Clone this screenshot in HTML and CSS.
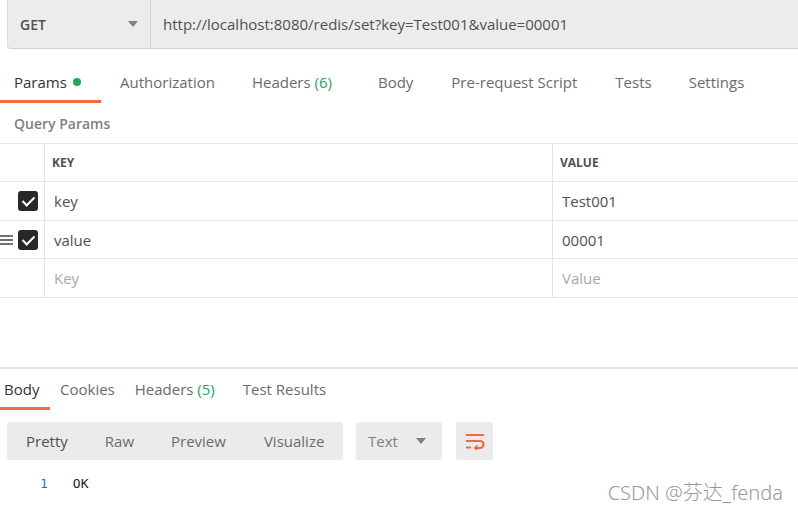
FILE: index.html
```html
<!DOCTYPE html>
<html lang="en">

<head>
    <meta charset="UTF-8">
    <meta name="viewport" content="width=device-width, initial-scale=1.0">
    <title>Postman Request</title>
    <link rel="stylesheet" href="styles.css">
</head>

<body>
    <div class="url-bar">
        <div class="method">
            <span>GET</span>
            <span class="caret"></span>
        </div>
        <div class="url">http://localhost:8080/redis/set?key=Test001&amp;value=00001</div>
    </div>

    <div class="tabs req-tabs">
        <div class="tab active">Params <span class="dot"></span></div>
        <div class="tab">Authorization</div>
        <div class="tab">Headers <span class="count">(6)</span></div>
        <div class="tab">Body</div>
        <div class="tab">Pre-request Script</div>
        <div class="tab">Tests</div>
        <div class="tab">Settings</div>
    </div>

    <div class="section-title">Query Params</div>

    <div class="params">
        <div class="row head">
            <div class="cell check"></div>
            <div class="cell key">KEY</div>
            <div class="cell value">VALUE</div>
        </div>
        <div class="row">
            <div class="cell check"><span class="box"></span></div>
            <div class="cell key">key</div>
            <div class="cell value">Test001</div>
        </div>
        <div class="row">
            <div class="cell check">
                <span class="handle"></span>
                <span class="box"></span>
            </div>
            <div class="cell key">value</div>
            <div class="cell value">00001</div>
        </div>
        <div class="row empty">
            <div class="cell check"></div>
            <div class="cell key">Key</div>
            <div class="cell value">Value</div>
        </div>
    </div>

    <div class="response">
        <div class="tabs res-tabs">
            <div class="tab active">Body</div>
            <div class="tab">Cookies</div>
            <div class="tab">Headers <span class="count">(5)</span></div>
            <div class="tab">Test Results</div>
        </div>

        <div class="toolbar">
            <div class="modes">
                <span>Pretty</span>
                <span>Raw</span>
                <span>Preview</span>
                <span>Visualize</span>
            </div>
            <div class="format">
                <span>Text</span>
                <span class="caret"></span>
            </div>
            <div class="wrap">
                <svg width="22" height="18" viewBox="0 0 22 18">
                    <path d="M2 3h18M2 9h14a3.5 3.5 0 0 1 0 7h-4M2 15.5h5" fill="none" stroke="#f26b3a" stroke-width="2.2"/>
                    <path d="M13.5 12.5l-4 3.5 4 3.5z" fill="#f26b3a"/>
                </svg>
            </div>
        </div>

        <div class="code">
            <span class="ln">1</span>
            <span class="txt">OK</span>
        </div>
    </div>

    <div class="watermark">CSDN @芬达_fenda</div>
</body>

</html>
```

FILE: styles.css
```css
body {
    font-family: "Open Sans", sans-serif;
    margin: 0;
    padding: 0;
    color: #505050;
    background: #fff;
    width: 798px;
    height: 514px;
    overflow: hidden;
    position: relative;
}

.url-bar {
    display: flex;
    height: 48px;
    margin-left: 7px;
    background: #ececec;
    border-bottom: 1px solid #d0d0d0;
    border-left: 1px solid #dadada;
    border-bottom-left-radius: 4px;
}

.method {
    width: 143px;
    display: flex;
    align-items: center;
    justify-content: space-between;
    padding: 0 12px 0 12px;
    box-sizing: border-box;
    border-right: 1px solid #d6d6d6;
    font-size: 14px;
    font-weight: 600;
    color: #505050;
}

.caret {
    width: 0;
    height: 0;
    border-left: 5px solid transparent;
    border-right: 5px solid transparent;
    border-top: 6px solid #808080;
}

.url {
    display: flex;
    align-items: center;
    padding-left: 12px;
    font-size: 15px;
    color: #505050;
}

.tabs {
    display: flex;
}

.tab {
    font-size: 15px;
    color: #6b6b6b;
    white-space: nowrap;
}

.tab.active {
    color: #333;
    border-bottom: 3px solid #f26b3a;
}

.count {
    color: #26a65b;
}

.dot {
    display: inline-block;
    width: 8px;
    height: 8px;
    border-radius: 50%;
    background: #26a65b;
    margin-left: 2px;
    vertical-align: 2px;
}

.req-tabs {
    margin-top: 23px;
    height: 31px;
}

.req-tabs .tab {
    height: 28px;
}

.req-tabs .tab:nth-child(1) { padding-left: 14px; width: 87px; }
.req-tabs .tab:nth-child(2) { margin-left: 19px; }
.req-tabs .tab:nth-child(3) { margin-left: 37px; }
.req-tabs .tab:nth-child(4) { margin-left: 46px; }
.req-tabs .tab:nth-child(5) { margin-left: 38px; }
.req-tabs .tab:nth-child(6) { margin-left: 38px; }
.req-tabs .tab:nth-child(7) { margin-left: 37px; }

.section-title {
    margin-top: 11px;
    padding-left: 14px;
    font-size: 14px;
    font-weight: 600;
    color: #808080;
    height: 21px;
}

.params {
    margin-top: 8px;
    border-top: 1px solid #e4e4e4;
}

.row {
    display: flex;
    height: 39px;
    box-sizing: border-box;
    border-bottom: 1px solid #e4e4e4;
}

.row.head {
    height: 38px;
}

.row:nth-child(3) {
    height: 38px;
}

.cell {
    display: flex;
    align-items: center;
    font-size: 15px;
    color: #505050;
}

.cell.check {
    width: 45px;
    justify-content: flex-end;
    padding-right: 6px;
    box-sizing: border-box;
    border-right: 1px solid #e4e4e4;
    position: relative;
}

.cell.key {
    width: 508px;
    padding-left: 9px;
    box-sizing: border-box;
    border-right: 1px solid #e4e4e4;
}

.cell.value {
    flex: 1;
    padding-left: 9px;
}

.row.head .cell.key,
.row.head .cell.value {
    font-size: 12px;
    font-weight: 700;
    color: #505050;
    padding-left: 7px;
}

.row.empty .cell.key,
.row.empty .cell.value {
    color: #a8a8a8;
}

.box {
    width: 20px;
    height: 20px;
    border-radius: 3px;
    background: #282828;
    position: relative;
}

.box::after {
    content: "";
    position: absolute;
    left: 7px;
    top: 3px;
    width: 5px;
    height: 10px;
    border-right: 2.5px solid #fff;
    border-bottom: 2.5px solid #fff;
    transform: rotate(45deg);
}

.handle {
    position: absolute;
    left: 0;
    top: 14px;
    width: 13px;
    height: 2px;
    background: #707070;
    box-shadow: 0 4px 0 #707070, 0 8px 0 #707070;
}

.response {
    margin-top: 69px;
    border-top: 2px solid #e2e2e2;
}

.res-tabs {
    margin-top: 10px;
    height: 32px;
}

.res-tabs .tab {
    height: 28px;
}

.res-tabs .tab:nth-child(1) { padding-left: 4px; width: 46px; }
.res-tabs .tab:nth-child(2) { margin-left: 10px; }
.res-tabs .tab:nth-child(3) { margin-left: 20px; }
.res-tabs .tab:nth-child(4) { margin-left: 28px; }

.toolbar {
    display: flex;
    margin-top: 11px;
    margin-left: 7px;
    height: 38px;
}

.modes {
    display: flex;
    align-items: center;
    width: 336px;
    background: #ebebeb;
    border-radius: 3px;
    font-size: 15px;
    color: #6b6b6b;
}

.modes span:nth-child(1) { margin-left: 19px; color: #505050; }
.modes span:nth-child(2) { margin-left: 37px; }
.modes span:nth-child(3) { margin-left: 37px; }
.modes span:nth-child(4) { margin-left: 38px; }

.format {
    display: flex;
    align-items: center;
    justify-content: space-between;
    width: 86px;
    margin-left: 13px;
    padding: 0 16px 0 12px;
    box-sizing: border-box;
    background: #ebebeb;
    border-radius: 3px;
    font-size: 15px;
    color: #808080;
}

.wrap {
    display: flex;
    align-items: center;
    justify-content: center;
    width: 37px;
    margin-left: 14px;
    background: #ebebeb;
    border-radius: 3px;
}

.code {
    display: flex;
    margin-top: 16px;
    font-family: "DejaVu Sans Mono", monospace;
    font-size: 13px;
}

.ln {
    margin-left: 40px;
    color: #2479b5;
}

.txt {
    margin-left: 25px;
    color: #1f1f1f;
}

.watermark {
    position: absolute;
    right: 15px;
    bottom: 8px;
    font-family: "Noto Sans", "Noto Sans CJK SC", sans-serif;
    font-size: 20px;
    font-weight: 300;
    color: #999;
}
```
